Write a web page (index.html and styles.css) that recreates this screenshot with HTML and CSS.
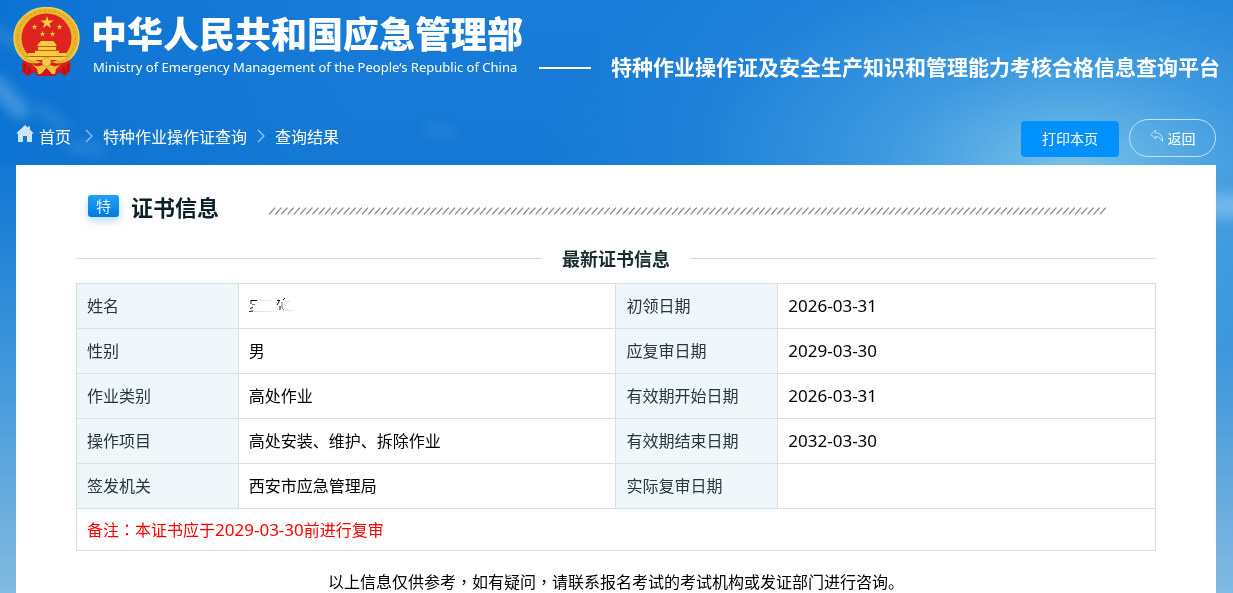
FILE: index.html
```html
<!DOCTYPE html>
<html lang="zh-CN">
<head>
<meta charset="utf-8">
<meta name="viewport" content="width=device-width, initial-scale=1">
<title>证书信息</title>
<link rel="stylesheet" href="styles.css">
</head>
<body>
<svg class="sky" aria-hidden="true" viewBox="0 0 1233 593" preserveAspectRatio="none">
  <defs>
    <filter id="soft" x="-50%" y="-50%" width="200%" height="200%"><feGaussianBlur stdDeviation="6"/></filter>
  </defs>
  <g fill="none" stroke="#8cc8f0" stroke-linecap="round" filter="url(#soft)">
    <path d="M-4 84Q8 98 20 110" stroke-width="18" opacity=".4"/>
    <path d="M38 108L64 126" stroke-width="8" opacity=".25"/>
    <path d="M-4 30Q8 44 18 40" stroke-width="8" opacity=".25"/>
    <path d="M70 146L100 150" stroke-width="8" opacity=".25"/>
    <path d="M430 128L450 134" stroke-width="10" opacity=".15"/>
    <path d="M1216 206H1240" stroke-width="24" opacity=".6"/>
  </g>
</svg>
<header class="masthead">
  <svg class="emblem" viewBox="0 0 67 70" role="img" aria-label="国徽">
    <path d="M9 56L15 53L33 64L52 53L58 56L57 64L52 69L46 65L42 69H25L21 65L15 69L9 65Z" fill="#c9151b"/>
    <ellipse cx="33.500" cy="31" rx="32.500" ry="30.500" fill="#e8b62f" stroke="#f4cf4d" stroke-width="1.500"/>
    <ellipse cx="33.500" cy="31" rx="29" ry="27.500" fill="none" stroke="#d39a20" stroke-width="1" stroke-dasharray="3 2"/>
    <ellipse cx="33.500" cy="31" rx="25" ry="24.500" fill="#dd241e"/>
    <g fill="#f3cd3f">
      <path d="M34 9L35.500 13.500H40.500L36.500 16.500L38 21L34 18.200L30 21L31.500 16.500L27.500 13.500H32.500Z"/>
      <path d="M21.500 17L22.200 19H24.500L22.600 20.300L23.300 22.500L21.500 21.200L19.700 22.500L20.400 20.300L18.500 19H20.800Z"/>
      <path d="M46.500 17L47.200 19H49.500L47.600 20.300L48.300 22.500L46.500 21.200L44.700 22.500L45.400 20.300L43.500 19H45.800Z"/>
      <path d="M29.500 24L30.200 26H32.500L30.600 27.300L31.300 29.500L29.500 28.200L27.700 29.500L28.400 27.300L26.500 26H28.800Z"/>
      <path d="M39.500 24L40.200 26H42.500L40.600 27.300L41.300 29.500L39.500 28.200L37.700 29.500L38.400 27.300L36.500 26H38.800Z"/>
      <path d="M26 36L28 34H40L42 36L44 39H24Z"/>
      <path d="M25 40H43V43H25Z"/>
      <path d="M22 44H46V46H53V49H15V46H22Z"/>
      <path d="M13 50H54L51 53H16Z"/>
    </g>
    <path d="M25 39.500H43M22 43.500H46M13 49.500H54" stroke="#c8681c" stroke-width=".7"/>
    <path d="M9 52Q22 61 33.500 52Q45 61 58 52L52 60Q46 66 33.500 66Q21 66 15 60Z" fill="#d5201d"/>
    <path d="M19 57Q26 62 33.500 56Q41 62 48 57L43 62L42 67H39L33.500 61L28 67H25L24 62Z" fill="#edbf38"/>
    <circle cx="33.500" cy="55" r="4.500" fill="#f1cc4a" stroke="#c98e1d" stroke-width="1" stroke-dasharray="2 1"/>
    <path d="M33.500 61L38 67H29Z" fill="#c9151b"/>
    <path d="M12 57V65M17 60L15 67M50 60L52 67M55 57V65" stroke="#94101a" stroke-width="1"/>
  </svg>
  <div class="agency">
    <div class="agency-name">中华人民共和国应急管理部</div>
    <div class="agency-sub">Ministry of Emergency Management of the People‘s Republic of China</div>
  </div>
  <div class="rule"></div>
  <h1 class="platform">特种作业操作证及安全生产知识和管理能力考核合格信息查询平台</h1>
</header>
<div class="toolbar">
  <nav class="crumbs" aria-label="面包屑">
    <a class="crumb home" href="#">
      <svg class="home-icon" viewBox="0 0 18 18" aria-hidden="true"><path d="M9 0L0 8.500H2V17H7V11H11V17H16V8.500H18L14 4.700V1.500H12V2.800Z" fill="#cfe3f7"/></svg>首页</a>
    <svg class="chevron first" viewBox="0 0 8 14" aria-hidden="true"><path d="M1 1L7 7L1 13"/></svg>
    <a class="crumb" href="#">特种作业操作证查询</a>
    <svg class="chevron" viewBox="0 0 8 14" aria-hidden="true"><path d="M1 1L7 7L1 13"/></svg>
    <a class="crumb" href="#">查询结果</a>
  </nav>
  <button class="btn print" type="button">打印本页</button>
  <button class="btn back" type="button"><svg class="back-icon" viewBox="0 0 14 14" aria-hidden="true"><path d="M5.500 1L1 5.500L5.500 10V7.500Q10 7 12.500 12.500Q13.500 4.500 5.500 3.500Z"/></svg>返回</button>
</div>
<main class="panel">
  <div class="section-head">
    <span class="badge">特</span>
    <h2 class="section-title">证书信息</h2>
    <svg class="hatch" aria-hidden="true">
      <defs><pattern id="slashes" width="6.200" height="8" patternUnits="userSpaceOnUse"><path d="M0 7.500L6.200 .5" stroke="#52645f" stroke-width=".9"/></pattern></defs>
      <rect width="100%" height="8" fill="url(#slashes)"/>
    </svg>
  </div>
  <h3 class="divider">最新证书信息</h3>
  <table class="cert">
    <tbody>
      <tr><th scope="row">姓名</th><td><svg class="name-mark" viewBox="0 0 46 16" role="img" aria-label="姓名已遮盖"><path d="M2 3.500H8M2 3V7M1 11.500L4 10.500M0 14.500L4 14M28 3.500H31M30 3V5L28 8M36 1L34 3M31 9V13" stroke="#111" fill="none"/><path d="M3 7.500H6M33 5V11L35 13" stroke="#8a6a48" fill="none"/><path d="M9 3.500H22M5 14.500H22M36 4.500H41M36 13.500H44" stroke="#e2e4e6" fill="none"/></svg></td><th scope="row">初领日期</th><td><time>2026-03-31</time></td></tr>
      <tr><th scope="row">性别</th><td>男</td><th scope="row">应复审日期</th><td><time>2029-03-30</time></td></tr>
      <tr><th scope="row">作业类别</th><td>高处作业</td><th scope="row">有效期开始日期</th><td><time>2026-03-31</time></td></tr>
      <tr><th scope="row">操作项目</th><td>高处安装、维护、拆除作业</td><th scope="row">有效期结束日期</th><td><time>2032-03-30</time></td></tr>
      <tr><th scope="row">签发机关</th><td>西安市应急管理局</td><th scope="row">实际复审日期</th><td></td></tr>
      <tr class="remark"><td colspan="4">备注<span class="mid" lang="zh-TW">：</span>本证书应于<time>2029-03-30</time>前进行复审</td></tr>
    </tbody>
  </table>
  <p class="notice">以上信息仅供参考<span class="mid" lang="zh-TW">，</span>如有疑问<span class="mid" lang="zh-TW">，</span>请联系报名考试的考试机构或发证部门进行咨询。</p>
</main>
</body>
</html>
```
FILE: styles.css
```css
* {
  box-sizing: border-box;
}

body {
  margin: 0;
  min-height: 100vh;
  position: relative;
  font: 16px/22px "Noto Sans CJK SC", sans-serif;
  color: #000;
  background:
    radial-gradient(ellipse 44% 48% at 87% 28%, rgba(135, 205, 238, 0.85), rgba(100, 184, 234, 0.5) 35%, rgba(70, 160, 226, 0.2) 70%, rgba(60, 150, 220, 0) 100%),
    linear-gradient(100deg, #0d73d2 0%, rgba(24, 126, 216, 0) 30%) 0 0 / 100% 165px no-repeat,
    linear-gradient(180deg, #187cd8 0%, #1478d4 30%, #3d96db 60%, #82bae0 100%);
}

.sky {
  position: absolute;
  inset: 0;
  width: 100%;
  height: 100%;
  z-index: -1;
}

.masthead {
  display: flex;
  align-items: flex-start;
  padding: 7px 13px 0;
  height: 119px;
  color: #fff;
}

.emblem {
  flex: none;
  width: 67px;
  height: 70px;
}

.agency {
  flex: none;
  margin-left: 11px;
  white-space: nowrap;
}

.agency-name {
  font-size: 36px;
  line-height: 50px;
  font-weight: 900;
}

.agency-sub {
  padding: 1px 0 0 2px;
  font: 13px/18px "Noto Sans", sans-serif;
}

.rule {
  width: 52px;
  height: 2px;
  margin: 60px 20px 0 16px;
  background: #fff;
}

.platform {
  margin: 43px 0 0 auto;
  font-size: 21px;
  line-height: 32px;
  font-weight: 700;
  white-space: nowrap;
}

.toolbar {
  display: flex;
  align-items: center;
  gap: 10px;
  height: 38px;
  margin: 0 17px 8px 16px;
}

.crumbs {
  display: flex;
  align-items: center;
  flex: 1;
  gap: 10px;
  padding-bottom: 4px;
}

.crumb {
  color: #fff;
  text-decoration: none;
  white-space: nowrap;
}

.home {
  display: flex;
  gap: 5px;
}

.home-icon {
  width: 18px;
  height: 18px;
}

.chevron {
  width: 8px;
  height: 14px;
  fill: none;
  stroke: #9cc4ea;
  stroke-width: 1.2;
}

.first {
  margin-left: 4px;
}

.btn {
  display: flex;
  align-items: center;
  justify-content: center;
  padding: 0 0 2px;
  border: 0;
  color: #fff;
  font: 14px/20px "Noto Sans CJK SC", sans-serif;
}

.print {
  width: 98px;
  height: 36px;
  margin-top: 2px;
  border-radius: 4px;
  background: #0090ff;
}

.back {
  width: 87px;
  height: 38px;
  gap: 4px;
  padding: 0;
  border: 1px solid #c3dff4;
  border-radius: 19px;
  background: transparent;
}

.back-icon {
  width: 14px;
  height: 14px;
  margin-bottom: 4px;
  fill: none;
  stroke: #c8e5f8;
}

.panel {
  margin: 0 17px 0 16px;
  padding: 26px 60px 0;
  min-height: calc(100vh - 165px);
  background: #fff;
}

.section-head {
  display: flex;
  align-items: center;
  height: 30px;
  padding: 0 50px 0 12px;
}

.badge {
  width: 31px;
  height: 22px;
  border-radius: 3px;
  background: linear-gradient(#23a0fa, #007adb);
  box-shadow: 0 4px 8px rgba(0, 136, 240, 0.3);
  color: #e4f4ff;
  font-size: 15px;
  line-height: 21px;
  text-align: center;
}

.section-title {
  margin: 0 50px 0 12px;
  color: #0c2125;
  font-size: 22px;
  line-height: 30px;
}

.hatch {
  flex: 1;
  height: 8px;
  margin-top: 10px;
}

.divider {
  display: flex;
  align-items: center;
  gap: 20px;
  margin: 25px 0 13px;
  color: #1a2c30;
  font-size: 18px;
  line-height: 24px;
}

.divider::before,
.divider::after {
  content: "";
  flex: 1;
  height: 1px;
  background: #d5dde3;
}

.cert {
  width: 100%;
  border-collapse: collapse;
  table-layout: fixed;
}

.cert th,
.cert td {
  width: 35%;
  height: 45px;
  padding: 0 10px 2px;
  border: 1px solid #dadfe2;
  text-align: left;
}

.cert th {
  width: 15%;
  background: #eff7fb;
  color: #26373d;
  font-weight: 400;
}

.cert .remark td {
  height: 42px;
  padding-bottom: 0;
  color: #f00;
}

time {
  font-family: "Noto Sans", sans-serif;
  font-size: 17px;
}

.name-mark {
  display: block;
  width: 46px;
  height: 16px;
}

.mid {
  font-family: "Noto Sans CJK TC", sans-serif;
}

.notice {
  margin: 19px 0 0;
  text-align: center;
}
```
